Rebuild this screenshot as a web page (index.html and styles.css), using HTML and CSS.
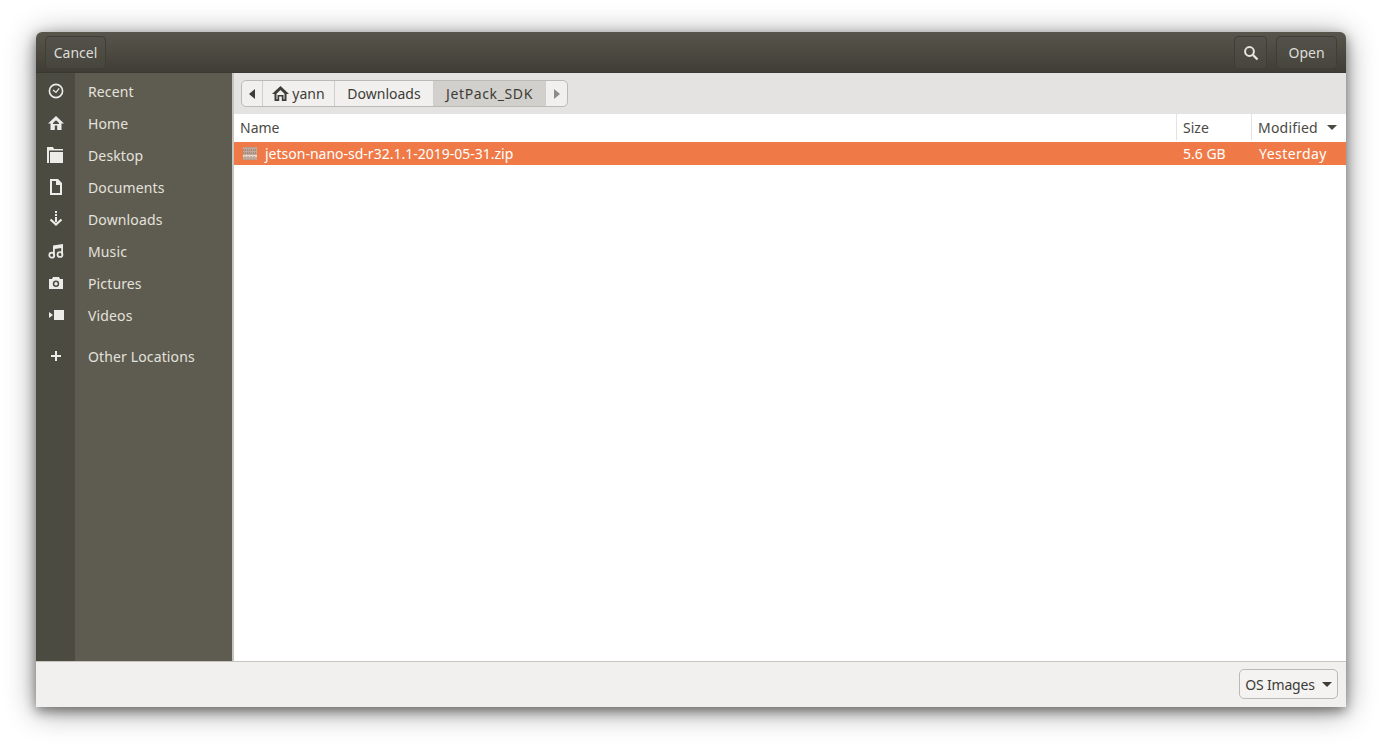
FILE: index.html
```html
<!DOCTYPE html>
<html lang="en">
<head>
<meta charset="utf-8">
<title>Open File</title>
<link rel="stylesheet" href="styles.css">
</head>
<body>
<div class="dialog">
  <header class="titlebar">
    <button class="hbtn cancel">Cancel</button>
    <div class="spacer"></div>
    <button class="hbtn search" aria-label="Search">
      <svg width="16" height="16" viewBox="0 0 16 16"><circle cx="6.500" cy="6.500" r="4.400" fill="none" stroke="#e6e4df" stroke-width="2"/><path d="M10 10l4.500 4.500" stroke="#e6e4df" stroke-width="2.400" fill="none"/></svg>
    </button>
    <button class="hbtn open">Open</button>
  </header>
  <div class="middle">
    <nav class="sidebar">
      <div class="side-row first"><span class="side-icon"><svg width="16" height="16" viewBox="0 0 16 16"><circle cx="8" cy="8" r="6.600" fill="none" stroke="#eeece8" stroke-width="1.600"/><path d="M5 7l3 2.400 3.200-4" fill="none" stroke="#eeece8" stroke-width="1.300"/></svg></span><span class="side-label">Recent</span></div>
      <div class="side-row"><span class="side-icon"><svg width="16" height="16" viewBox="0 0 16 16"><path d="M8 1L0 8.500h2.500V15h4.300v-4.500h2.400V15h4.300V8.500H16z" fill="#eeece8"/><path d="M5 8L8 5.200 11 8v1H5z" fill="#4c4b42"/></svg></span><span class="side-label">Home</span></div>
      <div class="side-row"><span class="side-icon"><svg width="17" height="16" viewBox="0 0 17 16"><path d="M0 0h6l1 2h9v1.500H2V16H0z" fill="#eeece8"/><path d="M3 5h13v11H3z" fill="#eeece8"/></svg></span><span class="side-label">Desktop</span></div>
      <div class="side-row"><span class="side-icon"><svg width="16" height="16" viewBox="0 0 16 16"><path d="M2 0h8l4 4v12H2zM4 2v12h8V6H8V2z" fill="#eeece8" fill-rule="evenodd"/></svg></span><span class="side-label">Documents</span></div>
      <div class="side-row"><span class="side-icon"><svg width="16" height="16" viewBox="0 0 16 16"><path d="M7 0h2v2H7zM7 3h2v2H7zM7 6h2v5H7z" fill="#eeece8"/><path d="M2.500 8.500L8 13.500l5.500-5" fill="none" stroke="#eeece8" stroke-width="2.200"/></svg></span><span class="side-label">Downloads</span></div>
      <div class="side-row"><span class="side-icon"><svg width="16" height="16" viewBox="0 0 16 16"><path d="M5 2.500L15 1v10.500h-1.800V5L6.800 6v6.500H5z" fill="#eeece8"/><circle cx="3.800" cy="12.200" r="2.500" fill="none" stroke="#eeece8" stroke-width="1.700"/><circle cx="12" cy="11.500" r="2.500" fill="none" stroke="#eeece8" stroke-width="1.700"/></svg></span><span class="side-label">Music</span></div>
      <div class="side-row"><span class="side-icon"><svg width="16" height="16" viewBox="0 0 16 16"><path d="M5 2h6l1 2h3v10H1V4h3z" fill="#eeece8"/><circle cx="8" cy="8.800" r="3.200" fill="#4c4b42"/><circle cx="8" cy="8.800" r="1.700" fill="#eeece8"/></svg></span><span class="side-label">Pictures</span></div>
      <div class="side-row"><span class="side-icon"><svg width="16" height="16" viewBox="0 0 16 16"><path d="M6 3h10v10H6z" fill="#eeece8"/><path d="M1 5l4 3-4 3z" fill="#eeece8"/></svg></span><span class="side-label">Videos</span></div>
      <div class="side-row other"><span class="side-icon"><svg width="16" height="16" viewBox="0 0 16 16"><path d="M7 3h2v4h4v2H9v4H7V9H3V7h4z" fill="#eeece8"/></svg></span><span class="side-label">Other Locations</span></div>
      <div class="side-fill"><span class="strip"></span></div>
    </nav>
    <main class="content">
      <div class="patharea">
        <div class="pathbar">
          <div class="crumb arrow"><svg width="6" height="10" viewBox="0 0 6 10"><path d="M6 0v10L0 5z" fill="#3d3c36"/></svg></div>
          <div class="crumb home"><svg width="17" height="15" viewBox="0 0 17 15"><path d="M8.500 0L0 8h2.500v7h4.700v-4.500h2.600V15h4.700V8H17z" fill="#3d3c36"/><path d="M4.500 7.800L8.500 4l4 3.800v5.400h-1V9H5.500v4.200h-1z" fill="#f1f0ee"/></svg><span>yann</span></div>
          <div class="crumb dl">Downloads</div>
          <div class="crumb active">JetPack_SDK</div>
          <div class="crumb arrow end"><svg width="6" height="10" viewBox="0 0 6 10"><path d="M0 0v10l6-5z" fill="#8d8b85"/></svg></div>
        </div>
      </div>
      <div class="list">
        <div class="row head">
          <div class="c-name">Name</div>
          <div class="c-size">Size</div>
          <div class="c-mod"><span class="mod-label">Modified</span><svg class="sort" width="10" height="5" viewBox="0 0 10 5"><path d="M0 0h10L5 5z" fill="#4a4943"/></svg></div>
        </div>
        <div class="row sel">
          <div class="c-name"><svg class="zip" width="16" height="16" viewBox="0 0 16 16"><path d="M1 1h14v13H1z" fill="#c2a898"/><path d="M1 4h14M1 7h14" stroke="#8c6f62" stroke-width="1" stroke-dasharray="1 1"/><path d="M1 10h14" stroke="#e7d9d0" stroke-width="2"/><path d="M3 1v13M6 1v13M9 1v13M12 1v13" stroke="#a08a80" stroke-width="1" stroke-dasharray="1 2"/></svg><span>jetson-nano-sd-r32.1.1-2019-05-31.zip</span></div>
          <div class="c-size">5.6 GB</div>
          <div class="c-mod yest">Yesterday</div>
        </div>
      </div>
    </main>
  </div>
  <footer class="footer">
    <button class="combo"><span class="combo-label">OS Images</span><svg width="10" height="5" viewBox="0 0 10 5"><path d="M0 0h10L5 5z" fill="#3d3c36"/></svg></button>
  </footer>
</div>
</body>
</html>
```
FILE: styles.css
```css
* { box-sizing: border-box; }
html, body { height: 100%; }
body {
  margin: 0;
  padding: 32px 38px 42px 36px;
  background: #fff;
  font-family: "Noto Sans", "Open Sans", sans-serif;
  font-size: 14px;
  color: #3d3c36;
  overflow: hidden;
}
button { font: inherit; }
.dialog {
  height: 675px;
  display: flex;
  flex-direction: column;
  border-radius: 6px 6px 0 0;
  box-shadow: 0 4px 12px rgba(0,0,0,.42), 0 4px 30px rgba(0,0,0,.42);
  background: #f1f0ee;
}
.titlebar {
  height: 41px;
  flex: none;
  display: flex;
  align-items: flex-start;
  gap: 9px;
  padding: 4px 9px 0 9px;
  border-radius: 6px 6px 0 0;
  background: linear-gradient(#58564c, #3f3d35);
  border-bottom: 1px solid #3a3832;
}
.spacer { flex: 1; }
.hbtn {
  height: 33px;
  border: 1px solid #3f3e36;
  border-radius: 4px;
  background: linear-gradient(#53514a, #47463d);
  color: #dfddd8;
  padding: 0;
  display: flex;
  align-items: center;
  justify-content: center;
}
.cancel { width: 61px; }
.search { width: 33px; }
.open { width: 61px; }
.middle { flex: 1; min-height: 0; display: flex; }
.sidebar {
  width: 198px;
  flex: none;
  display: flex;
  flex-direction: column;
  background: #5e5c50;
  border-right: 2px solid #c6c4bf;
  color: #e4e2dd;
}
.side-row { height: 32px; flex: none; display: flex; align-items: center; }
.side-row.first { height: 34px; }
.side-row.first .side-icon,
.side-row.first .side-label { padding-top: 2px; }
.side-row.other { height: 41px; }
.side-row.other .side-icon,
.side-row.other .side-label { padding-top: 9px; }
.side-label { letter-spacing: .13px; }
.side-icon {
  width: 39px;
  align-self: stretch;
  flex: none;
  display: flex;
  align-items: center;
  justify-content: center;
  background: #4c4b42;
  margin-right: 13px;
}
.side-fill { flex: 1; display: flex; }
.strip { width: 39px; background: #4c4b42; }
.content { flex: 1; min-width: 0; display: flex; flex-direction: column; }
.patharea {
  height: 41px;
  flex: none;
  background: #e4e3e1;
  padding: 7px 0 0 7px;
}
.pathbar {
  display: inline-flex;
  height: 27px;
  border: 1px solid #bcbab5;
  border-radius: 5px;
  background: #f1f0ee;
  overflow: hidden;
}
.crumb {
  display: flex;
  align-items: center;
  border-right: 1px solid #cfcdc8;
  gap: 3px;
}
.crumb.arrow { width: 21px; justify-content: center; }
.crumb.home { width: 72px; justify-content: center; }
.crumb.dl { width: 99px; justify-content: center; }
.crumb.active { width: 112px; justify-content: center; background: #d2d0cc; letter-spacing: .62px; }
.crumb.end { border-right: 0; }
.list { flex: 1; background: #fff; }
.row { display: flex; }
.row.head { height: 28px; color: #4a4943; padding-bottom: 2px; }
.row.sel { height: 23px; background: #f07a47; color: #fff; align-items: center; }
.head > div { display: flex; align-items: center; height: 100%; }
.c-name { flex: 1; min-width: 0; padding-left: 6px; display: flex; align-items: center; }
.c-size { width: 75px; padding-left: 6px; }
.c-mod { width: 95px; padding-left: 6px; }
.head .c-size, .head .c-mod { border-left: 1px solid #e4e3e1; }
.sel .c-size { padding-left: 7px; }
.sel .c-mod { padding-left: 8px; }
.yest { letter-spacing: .45px; }
.mod-label { letter-spacing: .2px; }
.sort { margin-left: 9px; }
.zip { margin-left: 2px; margin-right: 7px; }
.footer {
  height: 46px;
  flex: none;
  background: #f1f0ee;
  border-top: 1px solid #c6c4bf;
  display: flex;
  justify-content: flex-end;
  align-items: flex-start;
  padding: 7px 8px 0 0;
}
.combo {
  width: 99px;
  height: 30px;
  border: 1px solid #bcbab5;
  border-radius: 5px;
  background: #f4f3f1;
  color: #3d3c36;
  padding: 0;
  display: flex;
  align-items: center;
  justify-content: center;
  gap: 7px;
}
.combo-label { letter-spacing: -.2px; }
```
